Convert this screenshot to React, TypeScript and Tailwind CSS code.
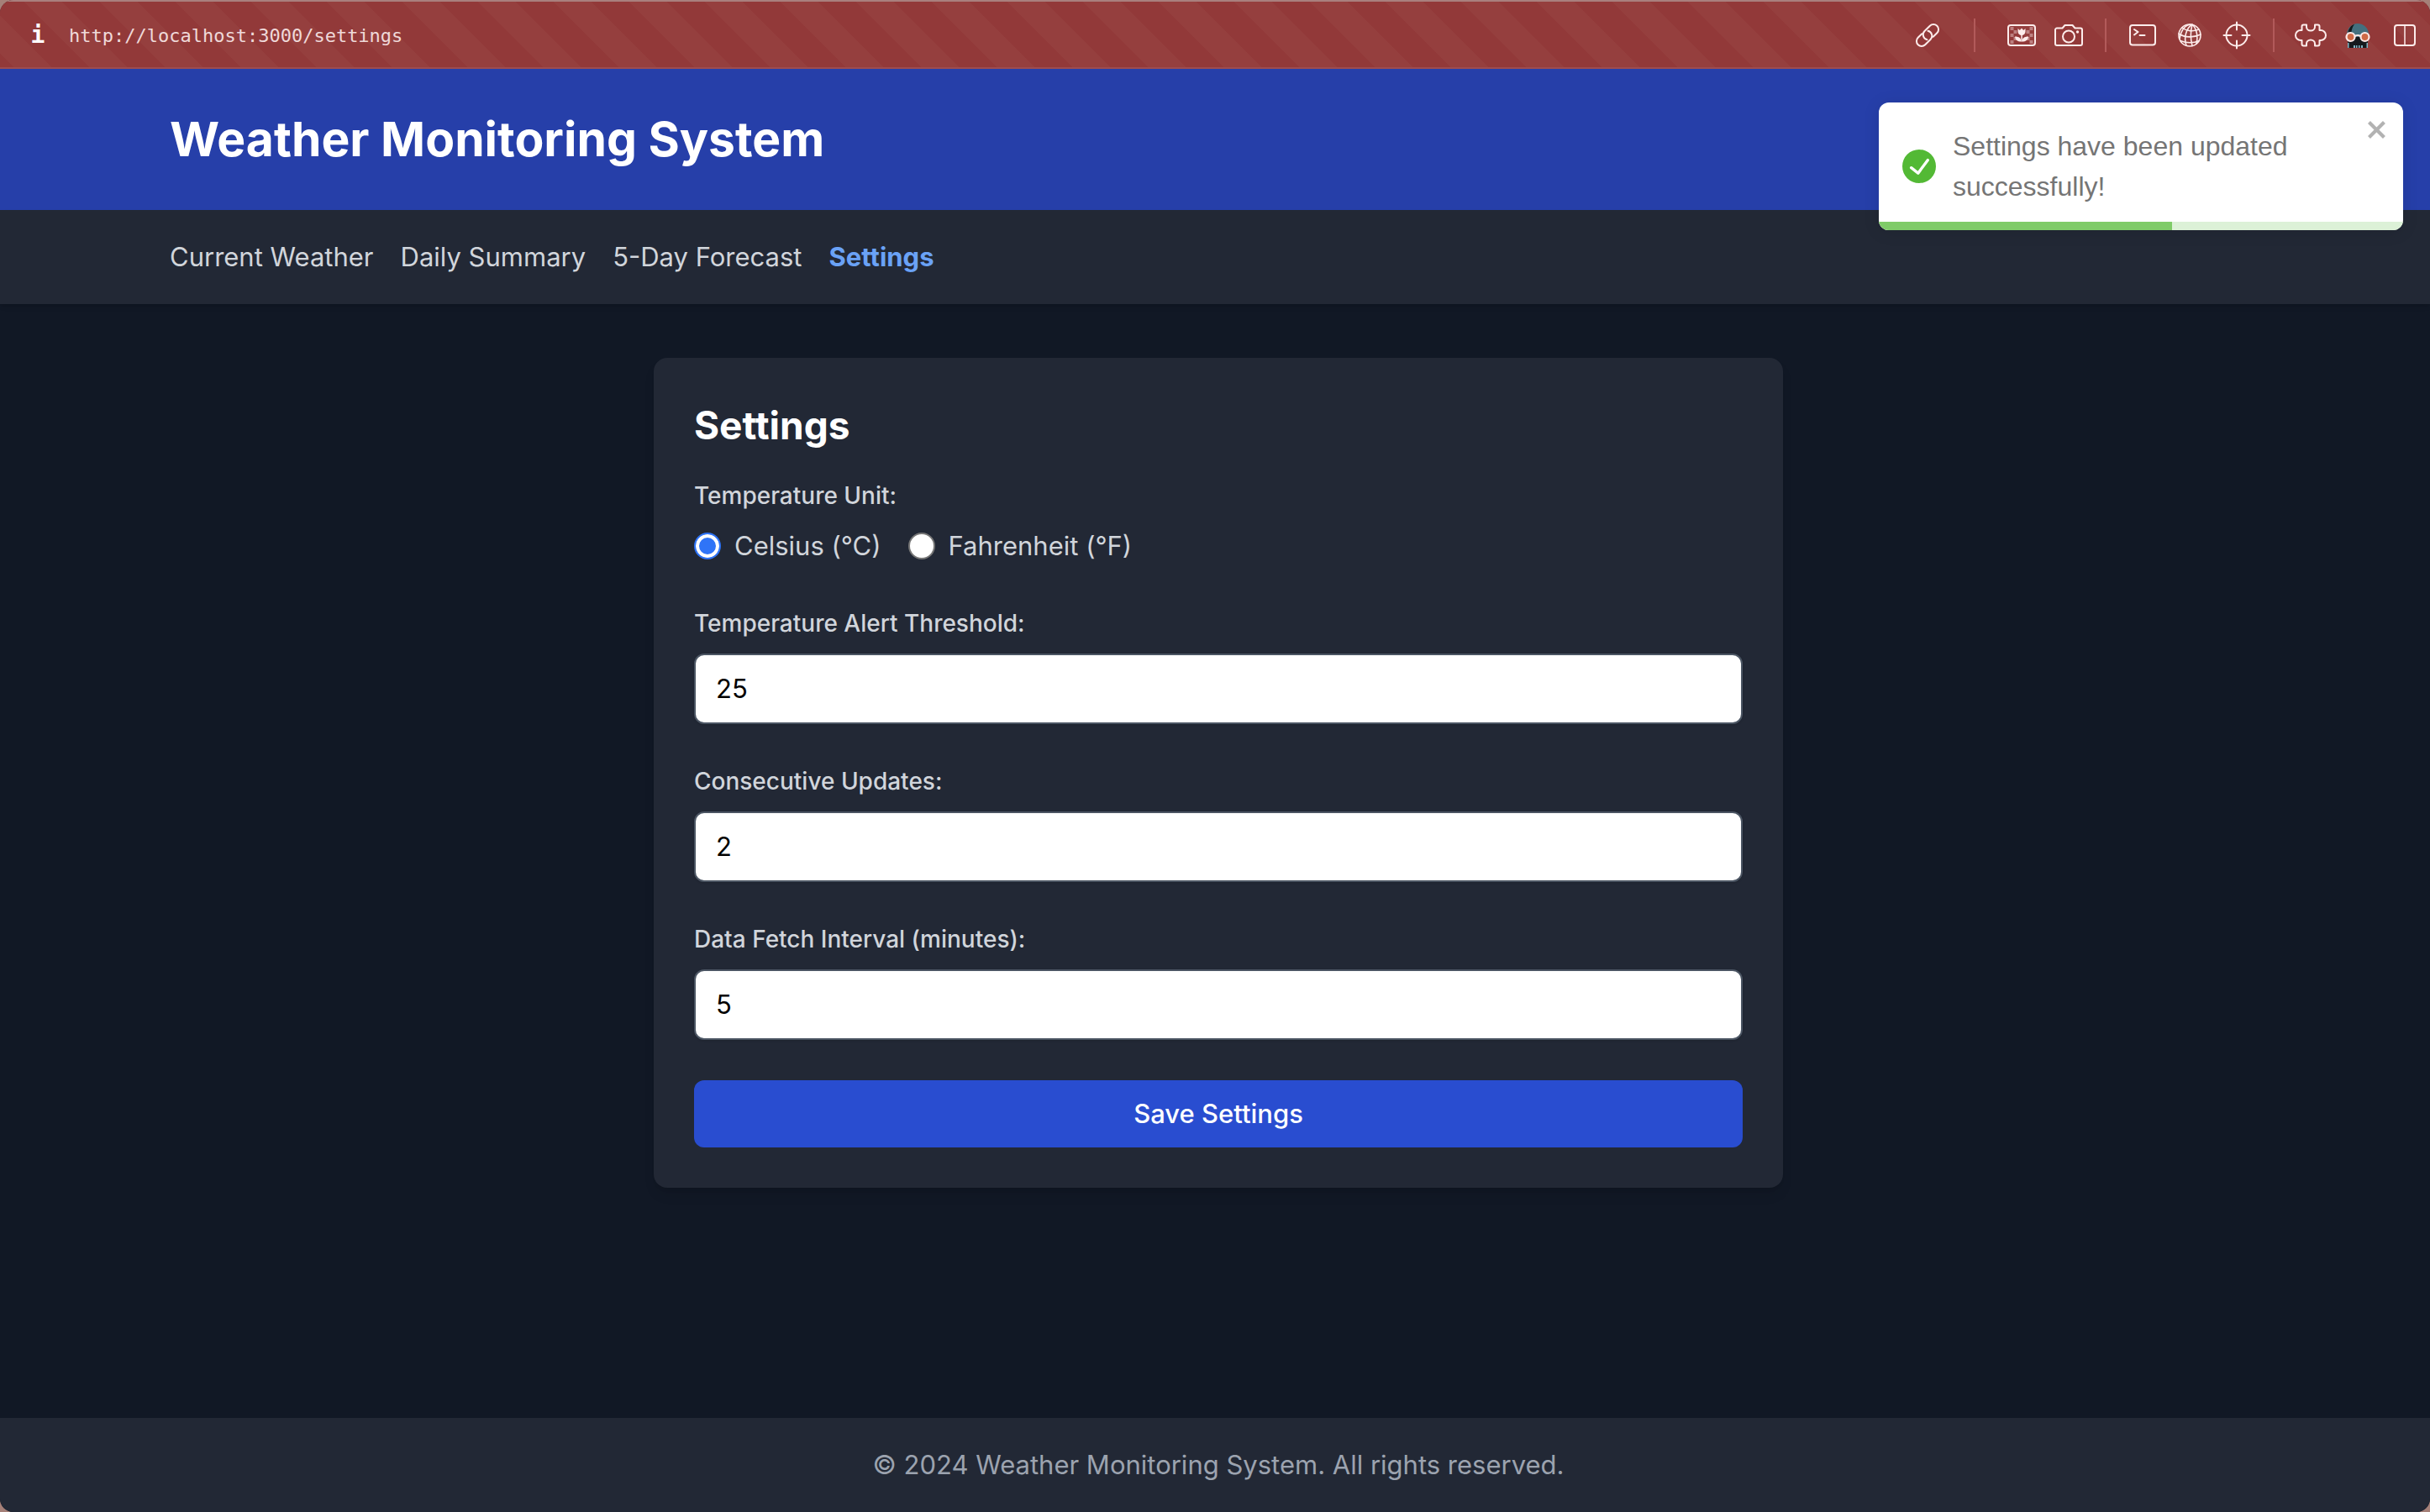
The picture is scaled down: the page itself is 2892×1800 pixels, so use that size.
import { useState, type ReactNode } from "react";

const NAV = ["Current Weather", "Daily Summary", "5-Day Forecast", "Settings"];

const stroke = {
  fill: "none",
  stroke: "currentColor",
  strokeWidth: 2,
  strokeLinecap: "round" as const,
  strokeLinejoin: "round" as const,
};

function LinkIcon() {
  return (
    <svg className="size-8" viewBox="0 0 32 32" aria-hidden="true">
      <g transform="translate(16 16) rotate(-45)" {...stroke}>
        <path d="M-3.5 -6H-10A6 6 0 0 0 -10 6H-1A6 6 0 0 0 4 -3.3" />
        <path d="M3.5 6H10A6 6 0 0 0 10 -6H1A6 6 0 0 0 -4 3.3" />
      </g>
    </svg>
  );
}

function PictureIcon() {
  const squares = [
    [4, 4], [4, 12], [4, 20], [8, 8], [8, 16],
    [27, 4], [27, 12], [27, 20], [23, 8], [23, 16],
  ];
  return (
    <svg className="h-7 w-9" viewBox="0 0 36 28" aria-hidden="true">
      <rect x="2" y="2" width="32" height="24" rx="3" {...stroke} />
      {squares.map(([x, y]) => (
        <rect key={`${x}-${y}`} x={x + 0.5} y={y} width="4" height="4" fill="currentColor" opacity="0.4" />
      ))}
      <g fill="currentColor">
        <path d="M13.5 6l2.300 2 2.200-2.500 2.200 2.500 2.300-2v3.500a4.500 4.500 0 0 1-9 0z" />
        <path d="M17.300 12h1.500v9.500h-1.500z" />
        <path d="M10 15.500c5 0 7.500 2 7.500 6-4.500 0-7-2-7.500-6zM26 15.500c-5 0-7.500 2-7.500 6 4.500 0 7-2 7.500-6z" />
      </g>
    </svg>
  );
}

function CameraIcon() {
  return (
    <svg className="h-7 w-9" viewBox="0 0 36 28" aria-hidden="true">
      <path
        d="M4 5.500h6.500L13.500 2h9l3 3.500H32a2 2 0 0 1 2 2V24a2 2 0 0 1-2 2H4a2 2 0 0 1-2-2V7.500a2 2 0 0 1 2-2z"
        {...stroke}
      />
      <circle cx="18" cy="15.500" r="7" {...stroke} />
      <circle cx="28.500" cy="10" r="1.700" fill="currentColor" />
    </svg>
  );
}

function TerminalIcon() {
  return (
    <svg className="h-7 w-9" viewBox="0 0 36 28" aria-hidden="true">
      <rect x="3" y="2" width="30" height="23.500" rx="3" {...stroke} />
      <path d="M8 7l4.500 3L8 13.500M14.500 14h6" {...stroke} />
    </svg>
  );
}

function GlobeIcon() {
  return (
    <svg className="size-8" viewBox="0 0 32 32" aria-hidden="true">
      <g {...stroke} strokeWidth="1.600">
        <circle cx="16" cy="16" r="13" />
        <path d="M19 3C11 8 9 20 12 28M19 3c-2 8-2 18 0 25.500M19 3c6 6 7 16 5 23M19 3C11 3 6 9 4 20" />
        <path d="M7 7c5 4 13 5 20 2M3 14c7 5 18 5 26 1M5 22.500c7 3 16 3 22 0" />
      </g>
    </svg>
  );
}

function TargetIcon() {
  return (
    <svg className="size-9" viewBox="0 0 36 36" aria-hidden="true">
      <g {...stroke}>
        <circle cx="18" cy="18" r="12.500" />
        <path d="M18 2.500v9M18 24.500v9M2.500 18h9M24.500 18h9" />
      </g>
    </svg>
  );
}

function PuzzleIcon() {
  return (
    <svg className="h-8 w-10" viewBox="0 0 40 32" aria-hidden="true">
      <path
        d="M9.500 10V5.500a2 2 0 0 1 2-2H15V6a5 4.500 0 0 0 10 0V3.500h3.500a2 2 0 0 1 2 2V10h1.500a6 6 0 0 1 0 12h-1.500v4.500a2 2 0 0 1-2 2H25V26a5 4.500 0 0 0-10 0v2.500h-3.500a2 2 0 0 1-2-2V22H8a6 6 0 0 1 0-12z"
        {...stroke}
      />
    </svg>
  );
}

function SkullIcon() {
  return (
    <svg className="size-8" viewBox="0 0 32 32" aria-hidden="true">
      <path d="M3 15a13 13 0 0 1 26 0v3H3z" fill="#44707f" />
      <path d="M4 14C5 8 8 4 12 3c-3 4-3 7-4 11z" fill="#15191d" />
      <path d="M4 18h24v13H4z" fill="#15191d" />
      <path d="M4 25h1.500v6H4zM26.500 25H28v6h-1.500zM11 28h2v3h-2zM14 28h1.500v3H14zM17 28h1.500v3H17zM20 28h2v3h-2z" fill="#7fb4c4" />
      <g fill="#cf6a47" stroke="#fbe9e7" strokeWidth="2.200">
        <circle cx="7.500" cy="18" r="5" />
        <circle cx="24.500" cy="18" r="5" />
        <path d="M12.500 17q3.500-2 7 0" fill="none" />
      </g>
    </svg>
  );
}

function PanelsIcon() {
  return (
    <svg className="size-7" viewBox="0 0 28 28" aria-hidden="true">
      <rect x="2" y="2" width="24" height="24" rx="3" {...stroke} />
      <path d="M14 2v24" {...stroke} opacity="0.75" />
    </svg>
  );
}

function BarButton({ label, children }: { label: string; children: ReactNode }) {
  return (
    <button type="button" aria-label={label} className="flex w-14 items-center justify-center">
      {children}
    </button>
  );
}

function Divider() {
  return <span className="h-10 w-[2px] bg-[#b25a5a]" />;
}

function BrowserBar() {
  return (
    <div className="flex h-[82px] items-center justify-between border-t-2 border-b-2 border-t-[#a97f7d] border-b-[#9d4c50] bg-[#923939] bg-[linear-gradient(45deg,#923939_25%,#953f3e_25%,#953f3e_50%,#923939_50%,#923939_75%,#953f3e_75%)] bg-size-[90px_90px] bg-position-[74px_0px] pt-[2px] pr-[2px] pl-9 font-['DejaVu_Sans_Mono',monospace] text-[22px] text-[#efd9d9]">
      <div className="flex items-center gap-7">
        <span className="w-[18px] text-center text-[28px] font-bold text-white">i</span>
        <span>http://localhost:3000/settings</span>
      </div>
      <div className="flex items-center text-[#fdeceb]">
        <BarButton label="Copy link"><LinkIcon /></BarButton>
        <div className="flex w-14 justify-center"><Divider /></div>
        <BarButton label="Picture"><PictureIcon /></BarButton>
        <BarButton label="Screenshot"><CameraIcon /></BarButton>
        <div className="flex w-8 justify-center"><Divider /></div>
        <BarButton label="Console"><TerminalIcon /></BarButton>
        <BarButton label="Network"><GlobeIcon /></BarButton>
        <BarButton label="Inspect"><TargetIcon /></BarButton>
        <div className="flex w-8 justify-center"><Divider /></div>
        <BarButton label="Extensions"><PuzzleIcon /></BarButton>
        <BarButton label="Profile"><SkullIcon /></BarButton>
        <BarButton label="Split view"><PanelsIcon /></BarButton>
      </div>
    </div>
  );
}

function Toast({ onClose }: { onClose: () => void }) {
  return (
    <div
      role="alert"
      className="absolute top-[122px] right-8 flex w-[624px] items-center overflow-hidden rounded-xl bg-white p-7 pr-8 font-['Liberation_Sans',Arial,sans-serif] text-[32px] leading-[48px] text-[#757575] shadow-[0_2px_20px_rgba(0,0,0,0.1)]"
    >
      <svg className="mr-5 size-10 shrink-0" viewBox="0 0 24 24" fill="#53b935" aria-hidden="true">
        <path d="M12 0a12 12 0 1012 12A12.014 12.014 0 0012 0zm6.927 8.200l-6.845 9.289a1.011 1.011 0 01-1.430.188l-4.888-3.908a1 1 0 111.250-1.562l4.076 3.261 6.227-8.451a1 1 0 111.610 1.183z" />
      </svg>
      <p>Settings have been updated successfully!</p>
      <button type="button" aria-label="Close" onClick={onClose} className="absolute top-4 right-4 text-[#b2b2b2]">
        <svg className="h-8 w-7" viewBox="0 0 14 16" fill="currentColor" aria-hidden="true">
          <path fillRule="evenodd" d="M7.710 8.230l3.750 3.750-1.480 1.480-3.750-3.750-3.750 3.750L1 11.980l3.750-3.750L1 4.480 2.480 3l3.750 3.750L9.980 3l1.480 1.480-3.750 3.750z" />
        </svg>
      </button>
      <div className="absolute inset-x-0 bottom-0 h-[10px] bg-[#dcf1d7]">
        <div className="h-full w-[56%] bg-[#7fcb68]" />
      </div>
    </div>
  );
}

function UnitRadio({ label, checked, onChange }: { label: string; checked: boolean; onChange: () => void }) {
  return (
    <label className="flex items-center gap-4 text-[31px] leading-[48px]">
      <input
        type="radio"
        name="unit"
        checked={checked}
        onChange={onChange}
        className="size-8 appearance-none rounded-full border-2 border-[#767676] bg-white checked:border-[#2f74f7] checked:bg-[#2f74f7] checked:shadow-[inset_0_0_0_4px_white]"
      />
      {label}
    </label>
  );
}

function NumberField({ id, label, initial }: { id: string; label: string; initial: string }) {
  const [value, setValue] = useState(initial);
  return (
    <div className="flex flex-col gap-4">
      <label htmlFor={id} className="text-[28px] leading-10 font-medium">
        {label}
      </label>
      <input
        id={id}
        inputMode="numeric"
        value={value}
        onChange={(e) => setValue(e.target.value)}
        className="w-full rounded-xl border-2 border-[#4b5563] bg-white px-6 py-4 text-[31px] leading-[48px] text-black shadow-sm"
      />
    </div>
  );
}

export default function App() {
  const [unit, setUnit] = useState("C");
  const [toast, setToast] = useState(true);
  return (
    <div className="bg-[#a58078]">
      <div className="relative flex min-h-screen flex-col overflow-hidden rounded-2xl bg-[#111825] font-[Inter,sans-serif] text-[#d1d5db]">
        <BrowserBar />
        <header className="bg-[#263fa9] py-12 pl-2">
          <div className="mx-auto max-w-[2560px] px-8">
            <h1 className="text-[57px] leading-[72px] font-bold text-white">Weather Monitoring System</h1>
          </div>
        </header>
        <nav className="bg-[#222835] py-8 pl-2 shadow-md">
          <ul className="mx-auto flex max-w-[2560px] gap-8 px-8 text-[31px] leading-[48px]">
            {NAV.map((item) => (
              <li key={item}>
                <a href="#" className={item === "Settings" ? "font-bold text-[#6aa2f6]" : ""}>
                  {item}
                </a>
              </li>
            ))}
          </ul>
        </nav>
        <main className="grow py-16 pl-2">
          <form
            onSubmit={(e) => {
              e.preventDefault();
              setToast(true);
            }}
            className="mx-auto flex max-w-[1344px] flex-col gap-12 rounded-2xl bg-[#222835] p-12 shadow-lg"
          >
            <div>
              <h2 className="mb-8 text-[46px] leading-[64px] font-bold text-white">Settings</h2>
              <fieldset>
                <legend className="text-[28px] leading-10 font-medium">Temperature Unit:</legend>
                <div className="mt-4 flex gap-8">
                  <UnitRadio label="Celsius (°C)" checked={unit === "C"} onChange={() => setUnit("C")} />
                  <UnitRadio label="Fahrenheit (°F)" checked={unit === "F"} onChange={() => setUnit("F")} />
                </div>
              </fieldset>
            </div>
            <NumberField id="threshold" label="Temperature Alert Threshold:" initial="25" />
            <NumberField id="updates" label="Consecutive Updates:" initial="2" />
            <NumberField id="interval" label="Data Fetch Interval (minutes):" initial="5" />
            <button type="submit" className="rounded-xl bg-[#294dd0] py-4 text-[31px] leading-[48px] font-medium text-white">
              Save Settings
            </button>
          </form>
        </main>
        <footer className="bg-[#222835] py-8 pl-2 text-center text-[31px] leading-[48px] text-[#9ca3af]">
          © 2024 Weather Monitoring System. All rights reserved.
        </footer>
        {toast && <Toast onClose={() => setToast(false)} />}
      </div>
    </div>
  );
}
